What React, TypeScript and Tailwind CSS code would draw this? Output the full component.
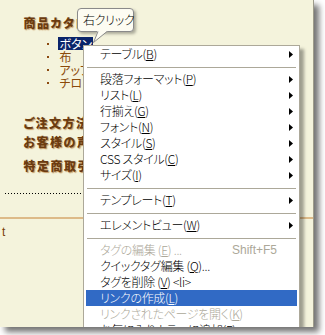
import React from "react";

const jp = "font-['Noto_Sans_CJK_JP','Noto_Sans',sans-serif] [font-feature-settings:'palt']";

function Arrow() {
  return (
    <svg width="4" height="7" viewBox="0 0 4 7" className="ml-auto shrink-0">
      <path d="M0 0 L4 3.5 L0 7 Z" fill="#000" />
    </svg>
  );
}

type Item = {
  label: string;
  key?: string;
  suffix?: string;
  sub?: boolean;
  disabled?: boolean;
  active?: boolean;
  shortcut?: string;
};

type Entry = Item | "sep";

const entries: Entry[] = [
  { label: "テーブル(", key: "B", suffix: ")", sub: true },
  "sep",
  { label: "段落フォーマット(", key: "P", suffix: ")", sub: true },
  { label: "リスト(", key: "L", suffix: ")", sub: true },
  { label: "行揃え(", key: "G", suffix: ")", sub: true },
  { label: "フォント(", key: "N", suffix: ")", sub: true },
  { label: "スタイル(", key: "S", suffix: ")", sub: true },
  { label: "CSS スタイル(", key: "C", suffix: ")", sub: true },
  { label: "サイズ(", key: "I", suffix: ")", sub: true },
  "sep",
  { label: "テンプレート(", key: "T", suffix: ")", sub: true },
  "sep",
  { label: "エレメントビュー(", key: "W", suffix: ")", sub: true },
  "sep",
  { label: "タグの編集 (", key: "E", suffix: ") ...", disabled: true, shortcut: "Shift+F5" },
  { label: "クイックタグ編集 (", key: "Q", suffix: ")..." },
  { label: "タグを削除 (", key: "V", suffix: ") <li>" },
  { label: "リンクの作成(", key: "L", suffix: ")", active: true },
  { label: "リンクされたページを開く(", key: "K", suffix: ")", disabled: true },
  { label: "お気に入りカラーに追加(", key: "F", suffix: ")" },
];

function MenuRow({ item }: { item: Item }) {
  const color = item.active
    ? "bg-[#316AC5] text-white"
    : item.disabled
    ? "text-[#ACA899]"
    : "text-black";
  return (
    <div className={`flex h-[16px] items-center pl-[14px] pr-[4px] ${color}`}>
      <span className="whitespace-pre text-[12px] font-light leading-none tracking-[-0.3px]">
        {item.label}
        <span className="underline underline-offset-[1px]">{item.key}</span>
        {item.suffix}
      </span>
      {item.shortcut && (
        <span className="ml-auto mr-[16px] text-[12px] leading-none font-['Liberation_Sans',sans-serif]">
          {item.shortcut}
        </span>
      )}
      {item.sub && <Arrow />}
    </div>
  );
}

function Heading({ children, className = "" }: { children: React.ReactNode; className?: string }) {
  return (
    <div
      className={`h-[16px] whitespace-nowrap text-[12px] leading-[16px] font-black tracking-[1.5px] text-[#6B3B10] [text-shadow:1px_1px_1px_#C49A64] ${className}`}
    >
      {children}
    </div>
  );
}

function Bullet({ children, selected = false }: { children: React.ReactNode; selected?: boolean }) {
  return (
    <div className="flex h-[13px] items-center">
      <span className="ml-[24px] h-[2px] w-[2px] bg-[#8B4A10]" />
      <span
        className={`ml-[9px] whitespace-nowrap px-px text-[12px] leading-[13px] ${
          selected ? "bg-[#0A246A] text-white" : "text-[#8B4A0B]"
        }`}
      >
        {children}
      </span>
    </div>
  );
}

const vDots = "w-px bg-[linear-gradient(to_bottom,#000_1px,transparent_1px)] bg-[length:1px_3px]";
const hDots = "h-px bg-[linear-gradient(to_right,#000_1px,transparent_1px)] bg-[length:3px_1px]";

export default function App() {
  return (
    <div className={`h-[335px] w-[325px] bg-white ${jp}`}>
      <div className="relative h-[327px] w-[314px] overflow-hidden border-r border-[#9D9B8A] bg-[#F4F3DC] shadow-[5px_5px_6px_rgba(0,0,0,0.55)]">
        {/* dotted box */}
        <div className="ml-[5px] w-[177px]">
          <div className="flex h-[193px]">
            <div className={vDots} />
            <div className="flex-1 pl-[18px] pt-[15px]">
              <Heading>商品カタログ</Heading>
              <div className="mt-[6px]">
                <Bullet selected>ボタン</Bullet>
                <Bullet>布</Bullet>
                <Bullet>アップリケ</Bullet>
                <Bullet>チロリアンテープ</Bullet>
              </div>
              <Heading className="mt-[26px]">ご注文方法</Heading>
              <Heading className="mt-[3px]">お客様の声</Heading>
              <Heading className="mt-[8px]">特定商取引法に基づく表記</Heading>
            </div>
            <div className={vDots} />
          </div>
          <div className={hDots} />
        </div>
        <div className="mt-[23px] h-[2px] bg-[#DDBA88]" />
        <div className="pl-[2px] pt-[6px] text-[12px] leading-[14px] text-[#7A3E08] font-['Liberation_Sans',sans-serif]">
          t
        </div>

        {/* context menu */}
        <div className="absolute left-[83px] top-[45px] w-[217px] border border-[#ACA899] bg-white px-[2px] shadow-[4px_4px_3px_rgba(0,0,0,0.35)]">
          {entries.map((e, i) =>
            e === "sep" ? (
              <div key={i} className="h-[9px] pt-[5px]">
                <div className="mx-px h-px bg-[#ACA899]" />
              </div>
            ) : (
              <MenuRow key={i} item={e} />
            )
          )}
        </div>

        {/* tooltip balloon */}
        <div className="absolute left-[77px] top-[8px] flex h-[24px] w-[57px] items-center whitespace-nowrap rounded-[4px] border border-[#8A8A8A] bg-[#FDFCF2] pl-[5px] text-[12px] font-light leading-none tracking-[-0.3px] text-black shadow-[2px_2px_3px_rgba(0,0,0,0.3)]">
          右クリック
        </div>
        <svg className="absolute left-[90px] top-[31px]" width="20" height="14" viewBox="0 0 20 14">
          <path d="M7.5 0 L17.5 0 L3.5 11.5 Z" fill="#FDFCF2" />
          <path d="M8 0.5 L3.5 11.5 L17 0.5" fill="none" stroke="#8A8A8A" strokeWidth="1" />
        </svg>
      </div>
    </div>
  );
}
